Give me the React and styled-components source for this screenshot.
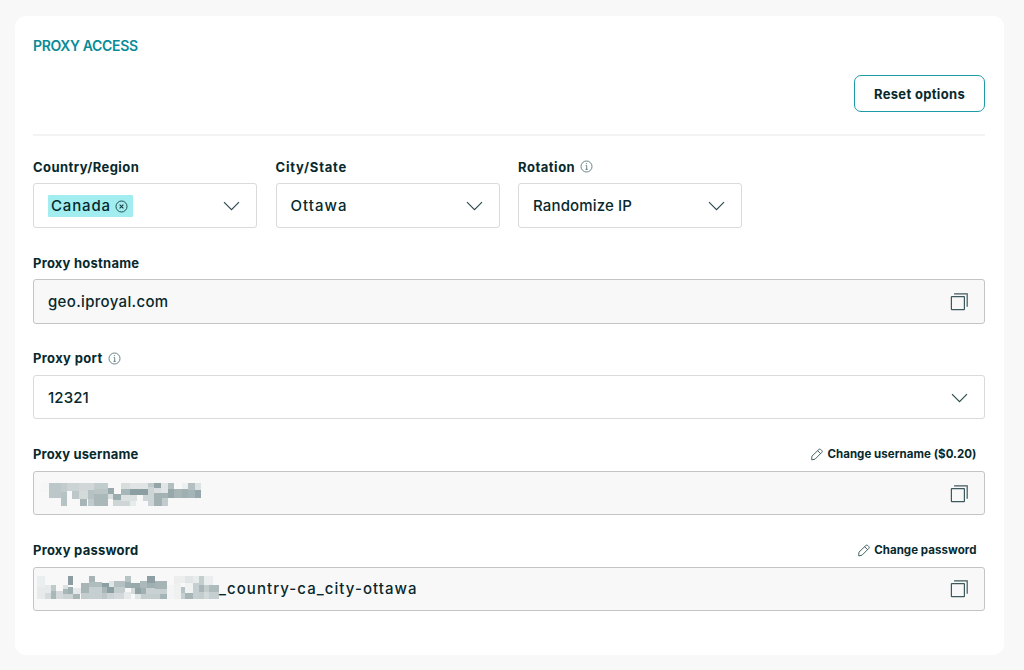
import React from 'react'
import styled, { createGlobalStyle } from 'styled-components'

const GlobalStyle = createGlobalStyle`
    * {
        box-sizing: border-box;
    }
    body {
        margin: 0;
        background-color: #f8f8f8;
        color: #07292d;
        font-family: Inter, "Liberation Sans", sans-serif;
    }
    svg {
        display: block;
        flex: none;
    }
`
const Page = styled.main`
    height: 670px;
    padding: 16px 20px 15px 15px;
    overflow: hidden;
`
const Card = styled.section`
    height: 639px;
    padding: 20px 19px 0 18px;
    border-radius: 11px;
    background-color: #fff;
`
const Title = styled.h1`
    margin: 0;
    line-height: 20px;
    font-size: 14px;
    font-weight: 600;
    letter-spacing: -.34px;
    color: #088b98;
`
const Actions = styled.div`
    display: flex;
    justify-content: flex-end;
    padding: 19.4px 0 21.6px;
    border-bottom: 2px solid #f3f3f3;
`
const ResetButton = styled.button`
    width: 131px;
    height: 37px;
    padding: 0;
    border: 1px solid #1c9ba7;
    border-radius: 7px;
    background-color: #fff;
    color: inherit;
    font-family: inherit;
    font-size: 13px;
    font-weight: 700;
    letter-spacing: .33px;
`
const Fields = styled.div`
    display: grid;
    row-gap: 23.36px;
    padding-top: 19.2px;
`
const SelectRow = styled.div`
    display: grid;
    grid-template-columns: repeat(3, 224px);
    column-gap: 18.5px;
`
const FieldHead = styled.div`
    display: flex;
    align-items: center;
    justify-content: space-between;
    height: 28px;
    padding: 0 8.5px 4.8px 0;
`
const Label = styled.label`
    display: flex;
    align-items: center;
    gap: 5px;
    font-size: 13px;
    font-weight: 700;
    letter-spacing: ${props => props.$spacing || 0}px;
    white-space: nowrap;
`
const ChangeLink = styled.button`
    display: flex;
    align-items: center;
    gap: 4px;
    padding: 0;
    border: none;
    background: none;
    color: inherit;
    font-family: inherit;
    font-size: 11.5px;
    font-weight: 700;
    letter-spacing: .05px;
    white-space: nowrap;
`
const Box = styled.div`
    display: flex;
    align-items: center;
    justify-content: space-between;
    height: 44.5px;
    padding: 1.2px 16px 0 ${props => props.$inset || 14}px;
    border: 1px solid ${props => props.$filled ? '#c3c5c5' : '#d9dadb'};
    border-radius: 3px;
    background-color: ${props => props.$filled ? '#f8f8f8' : '#fff'};
`
const Value = styled.span`
    font-size: 15px;
    font-weight: 500;
    line-height: 20px;
    letter-spacing: ${props => props.$spacing || 0}px;
    white-space: nowrap;
`
const Group = styled.div`
    display: flex;
    align-items: center;
`
const Tag = styled.span`
    display: flex;
    align-items: center;
    gap: 4px;
    width: 85px;
    height: 22px;
    padding-left: 3px;
    border-radius: 1px;
    background-color: #a2edf0;
`

const Chevron = () => (
    <svg width="17" height="10" viewBox="0 0 17 10" fill="none" stroke="#29474a" strokeWidth="1.15">
        <path d="M1 1.2 8.5 8.6 16 1.2" />
    </svg>
)
const CopyIcon = () => (
    <svg width="18" height="18" viewBox="0 0 18 18" fill="none" stroke="#3c5a5d" strokeWidth="1.2">
        <rect x="1.4" y="3.6" width="13" height="13" rx=".4" />
        <path d="M4.1 .8H17.2v12.9" />
    </svg>
)
const InfoIcon = () => (
    <svg width="13" height="13" viewBox="0 0 13 13" fill="none" stroke="#446468" strokeWidth=".8">
        <circle cx="6.5" cy="6.5" r="5.5" />
        <path d="M5.7 5.6h1v3.8M5.5 9.4h2.2M6.4 3.1v1" />
    </svg>
)
const RemoveIcon = () => (
    <svg width="13" height="13" viewBox="0 0 13 13" fill="none" stroke="#163c40">
        <circle cx="6.5" cy="6.5" r="5.5" strokeWidth=".9" />
        <path d="m4.6 4.6 3.8 3.8m0-3.8L4.6 8.4" strokeWidth="1.1" />
    </svg>
)
const PencilIcon = () => (
    <svg width="12" height="13" viewBox="0 0 12 13" fill="none" stroke="#29474a" strokeWidth=".85" strokeLinejoin="round">
        <path d="M.9 8.2 8 1.4q.8-.7 1.6 0l1.3 1.3q.7.8 0 1.6L4 11.2l-3.3.7zM6.7 2.7l2.9 3" />
    </svg>
)

// [x, y, width, height, color] in thirds of a pixel
const usernameBlocks = [
    [33, 42, 24, 26, '#f5f6f6'],
    [57, 42, 36, 45, '#bcc7c9'], [93, 42, 18, 26, '#c3cccd'], [93, 68, 18, 42, '#b7c2c4'],
    [111, 42, 37, 24, '#ccd3d5'], [148, 42, 44, 24, '#d1d7d9'], [192, 42, 42, 21, '#c3cccd'],
    [126, 66, 22, 24, '#bdc7c9'], [148, 66, 25, 25, '#d4dada'], [149, 91, 23, 19, '#a7b5b7'],
    [173, 63, 19, 28, '#b5c1c3'], [173, 91, 19, 19, '#c1cacc'], [192, 61, 42, 14, '#bac5c6'],
    [192, 75, 42, 35, '#abb8ba'], [234, 57, 18, 18, '#98a9ac'], [234, 75, 14, 16, '#d9dedf'],
    [248, 75, 25, 18, '#9cadaf'], [248, 93, 52, 17, '#ced5d6'], [273, 42, 27, 18, '#d8dede'],
    [300, 42, 54, 18, '#e0e4e4'], [273, 60, 27, 18, '#a7b6b8'], [300, 60, 54, 18, '#8b9ea1'],
    [273, 78, 48, 18, '#dce1e2'], [300, 96, 18, 14, '#e8ebeb'], [339, 78, 15, 18, '#cdd5d6'],
    [354, 42, 18, 12, '#bfc9ca'], [354, 54, 18, 56, '#cdd4d6'], [372, 42, 20, 15, '#93a5a7'],
    [372, 57, 20, 15, '#d9dfe0'], [392, 42, 22, 30, '#e1e5e6'], [372, 72, 24, 38, '#a3b1b3'],
    [396, 72, 18, 15, '#a3b3b5'], [396, 87, 17, 23, '#c2cbcd'], [414, 42, 18, 18, '#b2bec0'],
    [414, 60, 18, 27, '#97a8ab'], [432, 60, 24, 27, '#a7b5b7'], [456, 60, 18, 27, '#a0b0b2'],
    [474, 42, 20, 20, '#b3bfc1'], [474, 62, 20, 25, '#a5b4b6'], [456, 42, 18, 18, '#edf0f0'],
    [494, 42, 19, 22, '#dce1e2'], [494, 64, 19, 23, '#95a7aa'],
]
const passwordBlocks = [
    [21, 33, 24, 34, '#ebeeee'], [21, 67, 24, 34, '#e7eaeb'], [45, 60, 18, 23, '#e7eaeb'],
    [45, 83, 18, 18, '#d5dadc'], [63, 60, 14, 18, '#bfc9ca'], [63, 78, 14, 23, '#aab7b9'],
    [77, 78, 22, 23, '#d4dadb'], [99, 60, 15, 18, '#dbe0e1'], [99, 73, 15, 14, '#a8b6b8'],
    [99, 87, 30, 14, '#cbd3d4'], [114, 33, 15, 27, '#8b9da0'], [114, 67, 15, 20, '#9eafb1'],
    [129, 69, 24, 17, '#e6e9ea'], [129, 86, 21, 15, '#a9b6b8'], [153, 55, 24, 29, '#a7b5b7'],
    [153, 84, 24, 17, '#c4cdce'], [177, 33, 18, 18, '#a6b4b6'], [177, 51, 39, 16, '#b0bdbf'],
    [177, 67, 39, 34, '#c5ced0'], [216, 53, 22, 13, '#8b9ea1'], [216, 66, 15, 17, '#a8b6b8'],
    [231, 66, 22, 17, '#8b9ea1'], [216, 83, 14, 18, '#bdc7c9'], [230, 83, 23, 18, '#cbd3d4'],
    [238, 49, 15, 17, '#dfe4e4'], [253, 49, 33, 18, '#b5c0c2'], [253, 67, 33, 17, '#c4cdce'],
    [253, 84, 30, 17, '#d3d9da'], [286, 33, 17, 18, '#b7c2c4'], [286, 51, 17, 19, '#9cadaf'],
    [283, 82, 20, 19, '#e6eaea'], [303, 54, 27, 16, '#98a9ac'], [303, 70, 12, 17, '#d5dbdc'],
    [315, 70, 18, 17, '#90a2a5'], [333, 70, 15, 17, '#a0b0b2'], [315, 87, 18, 14, '#dfe4e4'],
    [333, 87, 56, 14, '#c4cdce'], [330, 48, 21, 22, '#acb9bb'], [351, 33, 24, 20, '#8d9fa2'],
    [351, 53, 24, 17, '#a0b0b2'], [348, 70, 41, 17, '#c9d1d2'], [375, 49, 36, 22, '#a6b4b6'],
    [389, 71, 22, 17, '#c5ced0'], [389, 88, 22, 13, '#a5b4b6'], [411, 60, 20, 41, '#f3f5f5'],
    [431, 33, 35, 20, '#eceeee'], [431, 53, 22, 48, '#eff1f1'], [466, 33, 23, 20, '#e1e5e6'],
    [489, 33, 18, 20, '#e9eced'], [507, 33, 15, 28, '#c4cdce'], [522, 33, 27, 28, '#ebeeee'],
    [453, 65, 13, 18, '#b5c1c3'], [453, 83, 13, 18, '#c5ced0'], [466, 53, 23, 30, '#f1f3f3'],
    [466, 83, 23, 18, '#a7b5b7'], [489, 53, 18, 48, '#c5ced0'], [507, 61, 15, 20, '#a8b6b8'],
    [507, 81, 15, 20, '#c4cdce'], [522, 61, 15, 20, '#c4cdce'], [537, 61, 29, 20, '#aebbbd'],
    [522, 81, 15, 20, '#d2d9da'], [537, 81, 29, 20, '#c5ced0'],
]

const Mosaic = ({ blocks, x, y, width, height, label }) => (
    <svg width={width / 3} height={height / 3} viewBox={`${x} ${y} ${width} ${height}`} shapeRendering="crispEdges" role="img" aria-label={label}>
        {blocks.map(([bx, by, w, h, fill], i) => (
            <rect key={i} x={bx} y={by} width={w} height={h} fill={fill} />
        ))}
    </svg>
)

const Field = ({ label, spacing, info, action, children, ...box }) => (
    <div>
        <FieldHead>
            <Label $spacing={spacing}>
                {label}
                {info && <InfoIcon />}
            </Label>
            {action}
        </FieldHead>
        <Box {...box}>{children}</Box>
    </div>
)

const App = () => {
    return (
        <Page>
            <GlobalStyle />
            <Card>
                <Title>PROXY ACCESS</Title>
                <Actions>
                    <ResetButton>Reset options</ResetButton>
                </Actions>
                <Fields>
                    <SelectRow>
                        <Field label="Country/Region" spacing={0.44}>
                            <Tag>
                                <Value $spacing={0.85}>Canada</Value>
                                <RemoveIcon />
                            </Tag>
                            <Chevron />
                        </Field>
                        <Field label="City/State" spacing={0.8}>
                            <Value $spacing={1.05}>Ottawa</Value>
                            <Chevron />
                        </Field>
                        <Field label="Rotation" spacing={0.52} info>
                            <Value $spacing={0.15}>Randomize IP</Value>
                            <Chevron />
                        </Field>
                    </SelectRow>
                    <Field label="Proxy hostname" spacing={0.24} $filled>
                        <Value $spacing={0.33}>geo.iproyal.com</Value>
                        <CopyIcon />
                    </Field>
                    <Field label="Proxy port" spacing={0.36} info>
                        <Value $spacing={0.1}>12321</Value>
                        <Chevron />
                    </Field>
                    <Field
                        label="Proxy username"
                        spacing={0.14}
                        action={<ChangeLink><PencilIcon />Change username ($0.20)</ChangeLink>}
                        $filled
                        $inset={7}
                    >
                        <Mosaic blocks={usernameBlocks} x={33} y={36} width={480} height={75} label="Hidden username" />
                        <CopyIcon />
                    </Field>
                    <Field
                        label="Proxy password"
                        spacing={0.25}
                        action={<ChangeLink><PencilIcon />Change password</ChangeLink>}
                        $filled
                        $inset={3}
                    >
                        <Group>
                            <Mosaic blocks={passwordBlocks} x={21} y={33} width={546} height={78} label="Hidden password" />
                            <Value $spacing={1.06}>_country-ca_city-ottawa</Value>
                        </Group>
                        <CopyIcon />
                    </Field>
                </Fields>
            </Card>
        </Page>
    )
}

export default App
